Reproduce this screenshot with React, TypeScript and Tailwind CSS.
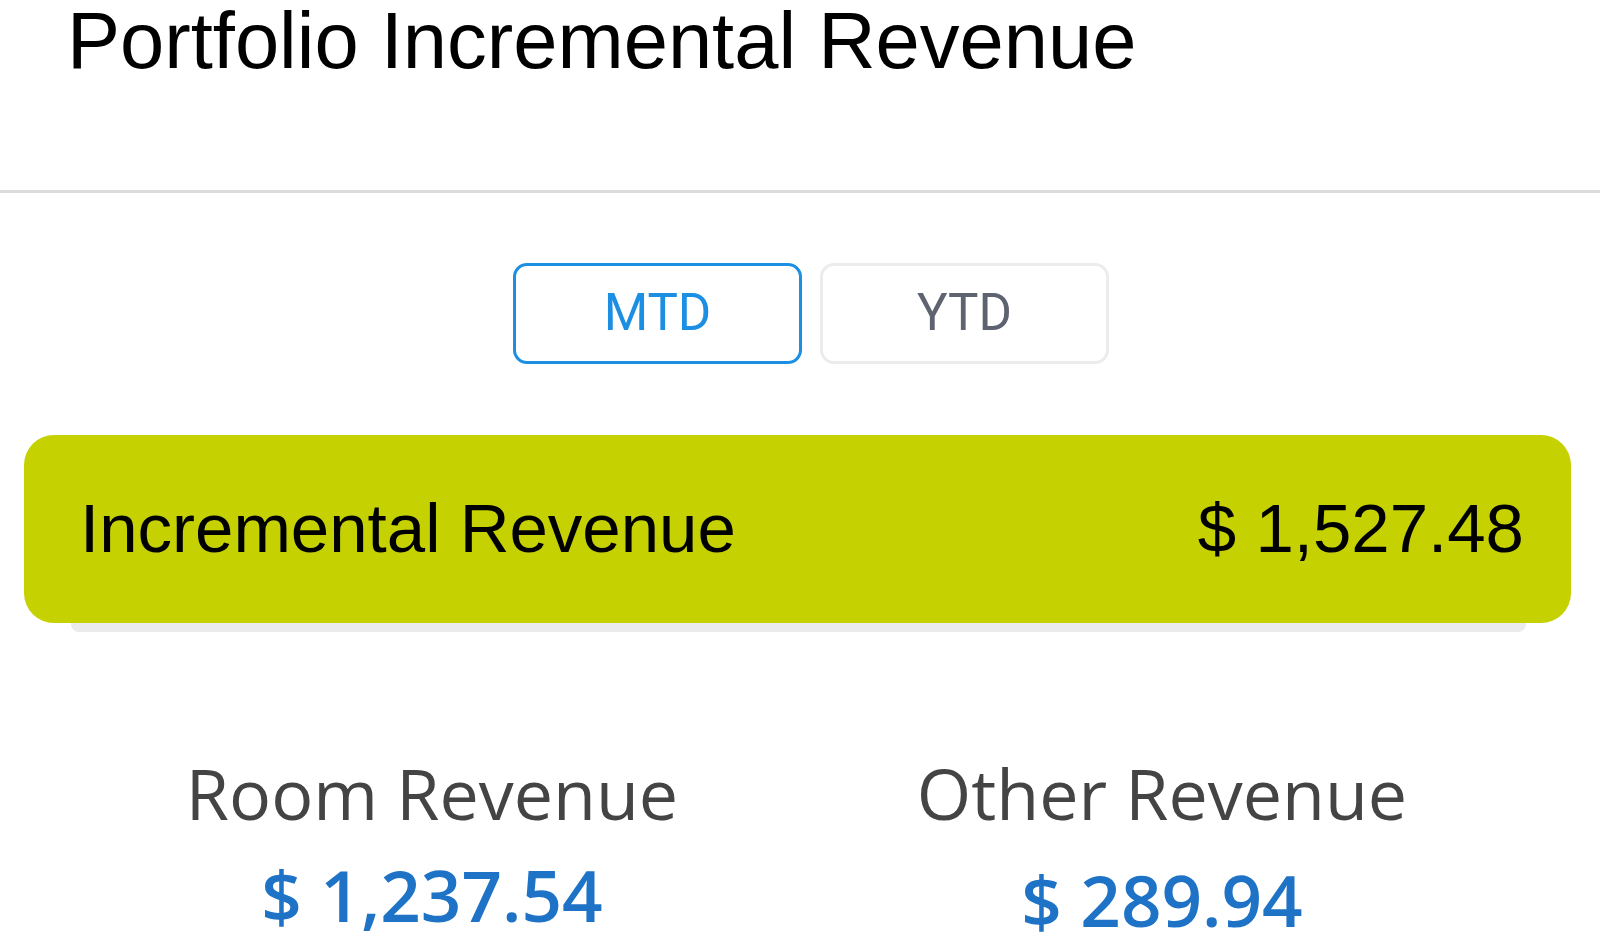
const Toggle = ({ label, active }: { label: string; active?: boolean }) => (
  <button
    className={`w-[289px] h-[101px] rounded-[14px] border-[3px] bg-white text-[51px] font-['Roboto',sans-serif] ${
      active ? 'border-[#1c8fe3] text-[#1c8fe3]' : 'border-[#ececec] text-[#5e6370]'
    }`}
  >
    {label}
  </button>
);

const Stat = ({ label, value, offset }: { label: string; value: string; offset?: boolean }) => (
  <div className="flex flex-col items-center">
    <div className="text-[70px] leading-[80px] text-[#444444] font-['Open_Sans',sans-serif]">{label}</div>
    <div
      className={`text-[71px] leading-[80px] font-semibold text-[#1f73c6] font-['Open_Sans',sans-serif] ${
        offset ? 'mt-[27px]' : 'mt-[22px]'
      }`}
    >
      {value}
    </div>
  </div>
);

export default function App() {
  return (
    <div className="w-[1600px] h-[937px] bg-white overflow-hidden font-['Liberation_Sans',Arial,sans-serif]">
      <div className="h-[193px] border-b-[3px] border-[#dcdcdc]">
        <h1 className="pl-[67px] pt-[1px] text-[79.5px] leading-[80px] text-black">Portfolio Incremental Revenue</h1>
      </div>

      <div className="flex gap-[18px] pl-[513px] pt-[70px]">
        <Toggle label="MTD" active />
        <Toggle label="YTD" />
      </div>

      <div className="ml-[24px] w-[1547px] mt-[71px]">
        <div className="h-[188px] rounded-[30px] bg-[#c6d102] flex items-center justify-between pl-[56px] pr-[47px] text-[69px] text-black">
          <span>Incremental Revenue</span>
          <span>$ 1,527.48</span>
        </div>
        <div className="ml-[47px] mr-[45px] h-[9px] bg-[#ebebeb] rounded-b-[8px]" />
      </div>

      <div className="ml-[67px] w-[1460px] grid grid-cols-2 mt-[121px]">
        <Stat label="Room Revenue" value="$ 1,237.54" />
        <Stat label="Other Revenue" value="$ 289.94" offset />
      </div>
    </div>
  );
}
